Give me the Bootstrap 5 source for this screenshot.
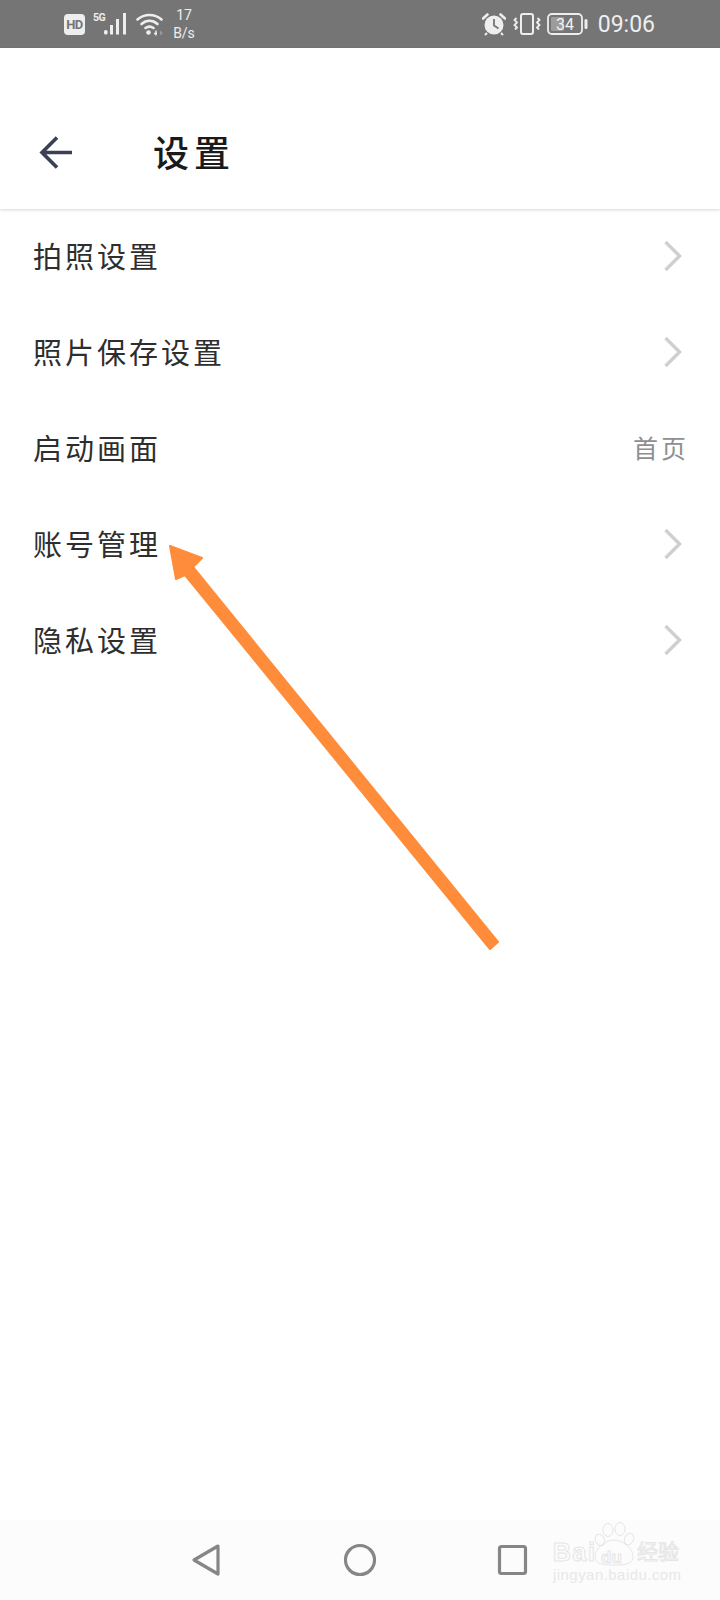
<!DOCTYPE html>
<html lang="zh">
<head>
<meta charset="utf-8">
<link href="https://cdn.jsdelivr.net/npm/bootstrap@5.3.0/dist/css/bootstrap.min.css" rel="stylesheet">
<style>
html,body{margin:0;background:#fff}
.shot{width:720px;height:1600px;font-family:"Noto Sans CJK SC","Noto Sans",sans-serif;overflow:hidden}
.sbar{height:48px;background:#757575;color:#eee;font-family:Roboto,"Liberation Sans",sans-serif;padding:0 65px 0 64px}
.hd-chip{width:21px;height:21px;background:#eee;color:#757575;border-radius:4px;font-size:13px;font-weight:700;line-height:21px;text-align:center;letter-spacing:-.5px}
.five{font-size:10.500px;font-weight:700;line-height:1;width:11px;align-self:flex-start;margin-top:13px;letter-spacing:-.5px;margin-left:8px}
.speed{font-size:14px;line-height:18px;text-align:center;width:26px;margin-left:7px;margin-top:-1px}
.clock{font-size:23px;line-height:1;margin-left:9px}
.batt{font-size:16px;fill:#f2f2f2;font-family:Roboto,sans-serif}
.ic-vib{margin-left:7px}
.ic-bat{margin-left:6px}
.topbar{height:161px;padding:87px 0 0 39px;box-shadow:0 1px 3px rgba(0,0,0,.16);background:#fff}
.back{width:36px;height:36px}
.ttl{font-size:36px;letter-spacing:5px;color:#1a1a1a;line-height:1;margin-left:78px;margin-top:-2px;font-weight:500}
.rows{margin-top:-2px}
.rowi{height:96px;padding:0 33px;border:0;color:#2e2e2e;font-size:29px;letter-spacing:3px;line-height:1;background:transparent}
.chev{width:20px;height:32px;margin-right:4px;position:relative;top:1px}
.val{color:#8f8f8f;font-size:25px;letter-spacing:3px;margin-right:-2px}
.navb{position:absolute;left:0;top:1520px;width:720px;height:80px;background:#fcfcfc}
.nv{position:absolute;top:0;left:0}
.arrow{position:absolute;left:0;top:0;width:720px;height:1000px;pointer-events:none;filter:blur(.6px)}
.wm{position:absolute;left:553px;top:1520px;width:130px;height:66px;font-family:"Liberation Sans",sans-serif}
.wm-b{position:absolute;left:0;top:20px;font-size:25px;line-height:1;font-weight:700;color:#fcfcfc;-webkit-text-stroke:1px #e6e6e6;letter-spacing:1.500px}
.wm-du{position:absolute;left:48px;top:29px;font-size:17px;line-height:1;font-weight:700;color:#fcfcfc;-webkit-text-stroke:1px #e6e6e6}
.wm-j{position:absolute;left:0;top:47px;font-size:15px;line-height:1;color:#e8e8e8;letter-spacing:.45px;white-space:nowrap}
.wm-c{position:absolute;left:84px;top:20px;font-size:21px;line-height:1;font-family:"Noto Sans CJK SC",sans-serif;color:#fcfcfc;-webkit-text-stroke:1px #e6e6e6;white-space:nowrap}
</style>
</head>
<body>
<div class="shot position-relative">
  <div class="sbar d-flex align-items-center">
    <div class="hd-chip">HD</div>
    <div class="five">5G</div>
    <svg width="24" height="24" viewBox="0 0 24 24" class="flex-shrink-0"><g fill="#eee"><rect x="0" y="18" width="3.600" height="4.500" rx="1.600"/><rect x="6" y="13" width="3" height="9.500"/><rect x="12" y="7" width="3" height="15.500"/><rect x="19" y="1" width="3" height="21.500"/></g></svg>
    <svg width="28" height="24" viewBox="0 0 28 24" class="flex-shrink-0 ms-2"><g fill="none" stroke="#eee" stroke-width="2.600" stroke-linecap="round"><path d="M1.500 7.500C8.500 1.500 18.500 1.500 25.500 7.500"/><path d="M5.500 12C10.500 7.800 16.500 7.800 21.500 12"/><path d="M9.500 16C12 14.200 15 14.200 17.500 16"/></g><circle cx="12.500" cy="20.500" r="2.300" fill="#eee"/><path d="M20 18.500v5M18 21.500h3" stroke="#eee" stroke-width="1.400"/><path d="M24 18.500l3 2.500-3 2.500z" fill="#999"/></svg>
    <div class="speed">17<br>B/s</div>
    <svg width="24" height="24" viewBox="0 0 24 24" class="flex-shrink-0 ms-auto"><circle cx="12" cy="13" r="9.500" fill="#eee"/><path d="M12 7v6.500l4.500 3" fill="none" stroke="#757575" stroke-width="1.800"/><path d="M1 6.500L5.500 2.500M23 6.500L18.500 2.500" stroke="#eee" stroke-width="2.600" stroke-linecap="round"/><path d="M5 21l-2 2M19 21l2 2" stroke="#eee" stroke-width="2"/></svg>
    <svg width="28" height="24" viewBox="0 0 28 24" class="flex-shrink-0 ic-vib"><rect x="8" y="2" width="12" height="20" rx="2" fill="none" stroke="#eee" stroke-width="2"/><path d="M3.500 6l-2 2 2.500 2.500-2.500 2.500 2.500 2.500-2 2M24.500 6l2 2-2.500 2.500 2.500 2.500-2.500 2.500 2 2" fill="none" stroke="#eee" stroke-width="1.800"/></svg>
    <svg width="42" height="24" viewBox="0 0 42 24" class="flex-shrink-0 ic-bat"><rect x="1" y="2" width="34" height="20" rx="4" fill="none" stroke="#eee" stroke-width="1.800"/><rect x="4" y="5" width="13" height="14" rx="1" fill="#9c9c9c"/><text x="18" y="17.800" text-anchor="middle" class="batt">34</text><rect x="37.500" y="7" width="3" height="10" rx="1.500" fill="#eee"/></svg>
    <div class="clock">09:06</div>
  </div>
  <header class="topbar d-flex align-items-start">
    <svg class="back flex-shrink-0" viewBox="0 0 36 36"><path d="M33 17.500H4M18 2.500L3 17.500l15 15" fill="none" stroke="#3b4154" stroke-width="3.600"/></svg>
    <div class="ttl">设置</div>
  </header>
  <div class="rows list-group list-group-flush">
    <div class="rowi list-group-item d-flex align-items-center justify-content-between"><span>拍照设置</span><svg class="chev" viewBox="0 0 20 32"><path d="M2.500 2l14 14-14 14" fill="none" stroke="#cfcfcf" stroke-width="3.400"/></svg></div>
    <div class="rowi list-group-item d-flex align-items-center justify-content-between"><span>照片保存设置</span><svg class="chev" viewBox="0 0 20 32"><path d="M2.500 2l14 14-14 14" fill="none" stroke="#cfcfcf" stroke-width="3.400"/></svg></div>
    <div class="rowi list-group-item d-flex align-items-center justify-content-between"><span>启动画面</span><span class="val">首页</span></div>
    <div class="rowi list-group-item d-flex align-items-center justify-content-between"><span>账号管理</span><svg class="chev" viewBox="0 0 20 32"><path d="M2.500 2l14 14-14 14" fill="none" stroke="#cfcfcf" stroke-width="3.400"/></svg></div>
    <div class="rowi list-group-item d-flex align-items-center justify-content-between"><span>隐私设置</span><svg class="chev" viewBox="0 0 20 32"><path d="M2.500 2l14 14-14 14" fill="none" stroke="#cfcfcf" stroke-width="3.400"/></svg></div>
  </div>
  <svg class="arrow" viewBox="0 0 720 1000"><path d="M170 546L202 558L193 567L498 942L490 949L185 575L176 579Z" fill="#ff8c3a" stroke="#ff8c3a" stroke-width="2" stroke-linejoin="round"/></svg>
  <div class="navb">
    <svg class="nv" width="720" height="80" viewBox="0 0 720 80"><g fill="none" stroke="#868686" stroke-width="3.200" stroke-linejoin="round"><path d="M218 26L194 40L218 54Z"/><circle cx="360" cy="40" r="14.500"/><rect x="499.500" y="26.500" width="26" height="27" rx="2"/></g></svg>
  </div>
  <div class="wm">
    <svg class="position-absolute top-0 start-0" width="130" height="66" viewBox="0 0 130 66"><g fill="none" stroke="#e6e6e6" stroke-width="1"><ellipse cx="55" cy="10" rx="5" ry="6.500"/><ellipse cx="47" cy="20" rx="4.500" ry="6" transform="rotate(-25 47 20)"/><ellipse cx="67" cy="9" rx="5" ry="6.500"/><ellipse cx="76" cy="19" rx="4.500" ry="6" transform="rotate(25 76 19)"/><path d="M61 20c9 0 20 9 19 18-1 7-11 7-19 7s-18 0-19-7c-1-9 10-18 19-18z"/></g></svg>
    <div class="wm-b">Bai</div>
    <div class="wm-du">du</div>
    <div class="wm-c">经验</div>
    <div class="wm-j">jingyan.baidu.com</div>
  </div>
</div>
<script src="https://cdn.jsdelivr.net/npm/bootstrap@5.3.0/dist/js/bootstrap.bundle.min.js"></script>
</body>
</html>
